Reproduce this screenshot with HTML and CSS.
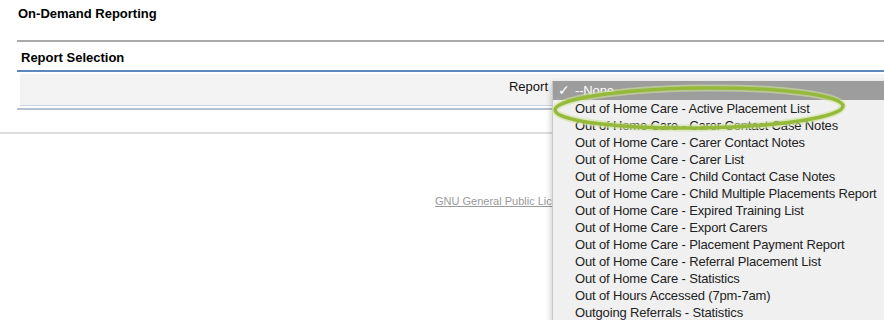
FILE: index.html
```html
<!DOCTYPE html>
<html lang="en">
<head>
    <meta charset="UTF-8">
    <title>On-Demand Reporting</title>
    <link rel="stylesheet" href="styles.css">
</head>
<body>
    <div class="page">
        <h1 class="page-title">On-Demand Reporting</h1>

        <div class="block">
            <h2 class="block-title">Report Selection</h2>
            <div class="block-body">
                <label class="field-label">Report</label>
            </div>
        </div>

        <div class="footer">
            <a href="#" class="license">GNU General Public License</a>
        </div>
    </div>

    <!-- native select popup, open -->
    <ul class="select-menu">
        <li class="selected"><span class="check">&#10003;</span>--None--</li>
        <li>Out of Home Care - Active Placement List</li>
        <li>Out of Home Care - Carer Contact Case Notes</li>
        <li>Out of Home Care - Carer Contact Notes</li>
        <li>Out of Home Care - Carer List</li>
        <li>Out of Home Care - Child Contact Case Notes</li>
        <li>Out of Home Care - Child Multiple Placements Report</li>
        <li>Out of Home Care - Expired Training List</li>
        <li>Out of Home Care - Export Carers</li>
        <li>Out of Home Care - Placement Payment Report</li>
        <li>Out of Home Care - Referral Placement List</li>
        <li>Out of Home Care - Statistics</li>
        <li>Out of Hours Accessed (7pm-7am)</li>
        <li>Outgoing Referrals - Statistics</li>
    </ul>

    <svg class="highlight" width="300" height="50" viewBox="0 0 300 50">
        <ellipse cx="148" cy="24" rx="144" ry="20" fill="none" stroke="#cfe39a" stroke-width="7" opacity="0.6" transform="rotate(-0.8 148 24)"/>
        <ellipse cx="148" cy="24" rx="144" ry="20" fill="none" stroke="#95ba3b" stroke-width="3.5" transform="rotate(-0.8 148 24)"/>
    </svg>
</body>
</html>
```

FILE: styles.css
```css
* {
    margin: 0;
    padding: 0;
    box-sizing: border-box;
}

body {
    font-family: 'Liberation Sans', Arial, sans-serif;
    background: #fff;
    color: #000;
    width: 884px;
    height: 320px;
    overflow: hidden;
    position: relative;
}

.page-title {
    font-size: 13px;
    font-weight: bold;
    padding: 6px 0 0 18px;
    height: 40px;
}

.block {
    margin-left: 17px;
    border-top: 2px solid #a9a9a9;
}

.block-title {
    font-size: 13px;
    font-weight: bold;
    padding: 8px 0 0 4px;
    height: 30px;
    border-bottom: 2px solid #5a88bb;
}

.block-body {
    margin-left: 3px;
    margin-top: 2px;
    height: 32px;
    background: #f3f3f3;
    border-bottom: 1px solid #c9d7e4;
    display: flex;
    justify-content: flex-end;
    align-items: flex-start;
    padding-right: 336px;
}

.field-label {
    font-size: 13px;
    color: #111;
    padding-top: 5px;
}

.block::after {
    content: '';
    display: block;
    margin-top: 2px;
    height: 2px;
    background: #b5c1cc;
}

.footer {
    margin-top: 22px;
    border-top: 2px solid #dedede;
    padding: 57px 0 0 435px;
}

.license {
    font-size: 11px;
    color: #9a9a9a;
}

.select-menu {
    list-style: none;
    position: absolute;
    left: 552px;
    top: 81px;
    width: 360px;
    padding-bottom: 20px;
    background: #f0f0f0;
    border-left: 1px solid #c8c8c8;
    box-shadow: -1px 2px 6px rgba(0,0,0,0.2);
    font-size: 13px;
    letter-spacing: -0.15px;
    color: #222;
}

.select-menu li {
    height: 17px;
    line-height: 17px;
    padding-left: 22px;
    white-space: nowrap;
    position: relative;
}

.select-menu li.selected {
    background: #9d9d9d;
    color: #fff;
    height: 19px;
    line-height: 19px;
}

.check {
    position: absolute;
    left: 5px;
    font-family: 'DejaVu Sans', sans-serif;
    font-size: 14px;
    font-weight: bold;
}

.highlight {
    position: absolute;
    left: 551px;
    top: 84px;
}
```
